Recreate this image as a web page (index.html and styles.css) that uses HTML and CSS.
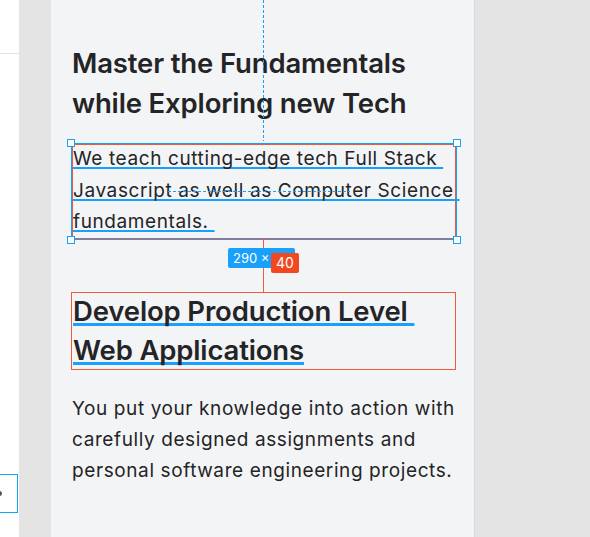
FILE: index.html
```html
<!DOCTYPE html>
<html>
<head>
<meta charset="utf-8">
<link rel="stylesheet" href="styles.css">
</head>
<body>
<div class="app">
  <aside class="sidebar">
    <div class="sidebar-rule"></div>
    <div class="sidebar-box"><span class="sidebar-dot"></span></div>
  </aside>
  <div class="gutter"></div>
  <main class="panel">
    <div class="guide-v"></div>
    <h1 class="title">Master the Fundamentals while Exploring new Tech</h1>
    <div class="selected">
      <p class="text sel-text"><span class="ul">We teach cutting-edge tech Full Stack </span><br><span class="ul">Javascript as well as Computer Science </span><br><span class="ul">fundamentals.&nbsp;</span></p>
      <span class="guide-h"></span>
      <span class="handle h-tl"></span>
      <span class="handle h-tr"></span>
      <span class="handle h-bl"></span>
      <span class="handle h-br"></span>
      <span class="measure"></span>
      <span class="badge badge-blue">290 ×</span>
      <span class="badge badge-red">40</span>
    </div>
    <div class="boxed">
      <h2 class="title"><span class="ul ul-thick">Develop Production Level </span><br><span class="ul ul-thick">Web Applications</span></h2>
    </div>
    <p class="text body2">You put your knowledge into action with carefully designed assignments and personal software engineering projects.</p>
  </main>
  <div class="rest"></div>
</div>
</body>
</html>
```
FILE: styles.css
```css
* { box-sizing: border-box; }
html, body { margin: 0; padding: 0; }
body {
  width: 590px;
  height: 537px;
  overflow: hidden;
  background: #e4e4e4;
  font-family: "Inter", "DejaVu Sans", sans-serif;
  color: #242427;
}
.app {
  display: flex;
  height: 537px;
}
.sidebar {
  width: 19px;
  background: #ffffff;
  position: relative;
  flex: none;
}
.sidebar-rule {
  margin-top: 53px;
  height: 1px;
  background: #e3e3e3;
}
.sidebar-box {
  position: absolute;
  left: -2px;
  top: 474px;
  width: 20px;
  height: 39px;
  border: 1px solid #18a0fb;
}
.sidebar-dot {
  position: absolute;
  left: -2px;
  top: 16px;
  width: 5px;
  height: 5px;
  border-radius: 50%;
  background: #555;
}
.gutter {
  width: 32px;
  flex: none;
  background: #e4e4e4;
}
.panel {
  width: 424px;
  flex: none;
  background: #f3f4f6;
  padding: 44px 0 0 21px;
  position: relative;
  border-right: 1px solid #dcdcdc;
}
.rest { flex: 1; background: #e4e4e4; }

.title {
  margin: 0;
  font-size: 27.5px;
  font-weight: 600;
  line-height: 39.5px;
  letter-spacing: -0.15px;
  width: 384px;
}
.text {
  margin: 0;
  font-size: 19px;
  line-height: 31px;
  font-weight: 400;
  letter-spacing: 0.6px;
}
.guide-v {
  position: absolute;
  left: 212px;
  top: 0;
  width: 1px;
  height: 141px;
  background: repeating-linear-gradient(to bottom, #18a0fb 0 3px, transparent 3px 5px);
}
.selected {
  position: relative;
  margin-top: 21px;
  width: 384px;
  padding: 0;
  border: 1px solid #ef5a3c;
  outline: 1px solid #18a0fb;
  outline-offset: 0;
}
.sel-text {
  margin-top: -2px;
  line-height: 31.5px;
}
.ul {
  text-decoration: underline;
  text-decoration-color: #18a0fb;
  text-decoration-thickness: 1.5px;
  text-decoration-skip-ink: none;
  text-underline-offset: 2px;
  white-space: pre;
}
.ul-thick {
  text-decoration-thickness: 2.5px;
  text-underline-offset: 2px;
}
.guide-h {
  position: absolute;
  left: 95px;
  top: 46px;
  width: 182px;
  height: 1px;
  background: repeating-linear-gradient(to right, #18a0fb 0 3px, transparent 3px 5px);
}
.handle {
  position: absolute;
  width: 8px;
  height: 8px;
  background: #ffffff;
  border: 1px solid #18a0fb;
}
.h-tl { left: -6px; top: -6px; }
.h-tr { right: -6px; top: -6px; }
.h-bl { left: -6px; bottom: -6px; }
.h-br { right: -6px; bottom: -6px; }
.measure {
  position: absolute;
  left: 190px;
  top: 93px;
  height: 54px;
  border-left: 1.5px solid #ef5a3c;
}
.badge {
  position: absolute;
  font-family: "Inter", "DejaVu Sans", sans-serif;
  font-size: 13px;
  line-height: 20px;
  color: #ffffff;
  border-radius: 2px;
  padding: 0 5px;
}
.badge-blue {
  left: 155px;
  top: 103px;
  width: 67px;
  background: #18a0fb;
}
.badge-red {
  left: 198px;
  top: 108px;
  background: #f24822;
  padding: 0 5px;
  font-size: 14px;
}
.boxed {
  margin-top: 53.5px;
  width: 385px;
  border: 1px solid #ef5a3c;
  margin-left: -1px;
  padding-left: 1px;
  height: 78px;
}
.boxed .title {
  line-height: 39px;
  margin-top: -1px;
}
.body2 {
  margin-top: 23px;
  width: 400px;
}
```
